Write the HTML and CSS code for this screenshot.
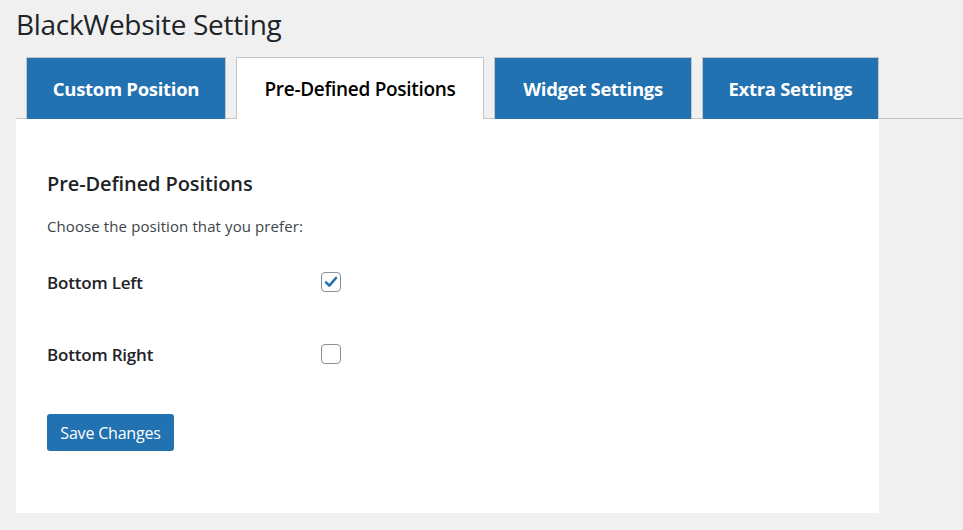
FILE: index.html
```html
<!DOCTYPE html>
<html>
<head>
<meta charset="utf-8">
<link rel="stylesheet" href="styles.css">
</head>
<body>
<div class="wrap">
  <h1 class="title">BlackWebsite Setting</h1>
  <nav class="tabs">
    <a class="tab">Custom Position</a>
    <a class="tab active">Pre-Defined Positions</a>
    <a class="tab">Widget Settings</a>
    <a class="tab">Extra Settings</a>
  </nav>
  <div class="panel">
    <h2 class="heading">Pre-Defined Positions</h2>
    <p class="desc">Choose the position that you prefer:</p>
    <div class="rows">
      <div class="row">
        <span class="label">Bottom Left</span>
        <span class="check">
          <svg viewBox="0 0 20 20" width="20" height="20"><path d="M5 10.4 L8.3 13.6 L15 6" fill="none" stroke="#2271b1" stroke-width="2.6" stroke-linecap="round" stroke-linejoin="round"/></svg>
        </span>
      </div>
      <div class="row">
        <span class="label">Bottom Right</span>
        <span class="check"></span>
      </div>
    </div>
    <button class="save">Save Changes</button>
  </div>
</div>
</body>
</html>
```
FILE: styles.css
```css
* { box-sizing: border-box; }
body {
  margin: 0;
  background: #f0f0f1;
  font-family: "Open Sans", "Noto Sans", sans-serif;
  color: #1d2327;
}
.wrap { padding-left: 16px; }
.title {
  margin: 0;
  padding-top: 6px;
  height: 57px;
  font-size: 28px;
  font-weight: 400;
  line-height: 36px;
  letter-spacing: -0.3px;
}
.tabs {
  display: flex;
  gap: 10px;
  padding-left: 10px;
  border-bottom: 1px solid #c3c4c7;
  height: 62px;
}
.tab {
  display: flex;
  align-items: center;
  justify-content: center;
  height: 62px;
  background: #2271b1;
  color: #fff;
  border: 1px solid #c3c4c7;
  border-bottom: none;
  font-size: 18.5px;
  font-weight: 700;
  letter-spacing: -0.3px;
}
.tab:nth-child(1) { width: 200px; }
.tab:nth-child(2) { width: 248px; }
.tab:nth-child(3) { width: 198px; }
.tab:nth-child(4) { width: 177px; }
.tab.active {
  background: #fff;
  color: #000;
  font-size: 19px;
  font-weight: 600;
  letter-spacing: -0.3px;
}
.panel {
  width: 863px;
  height: 394px;
  background: #fff;
  padding: 51px 31px 0;
}
.heading {
  margin: 0;
  font-size: 20px;
  font-weight: 600;
  line-height: 28px;
  letter-spacing: -0.1px;
}
.desc {
  margin: 18px 0 0;
  font-size: 15px;
  line-height: 20px;
  color: #3c434a;
  letter-spacing: 0.1px;
}
.rows {
  display: flex;
  flex-direction: column;
  gap: 32px;
  margin-top: 26px;
}
.row {
  display: flex;
  align-items: center;
  height: 40px;
}
.label {
  width: 274px;
  font-size: 17px;
  font-weight: 600;
  letter-spacing: -0.2px;
}
.check {
  width: 20px;
  height: 20px;
  border: 1px solid #8c8f94;
  border-radius: 4px;
  display: flex;
  align-items: center;
  justify-content: center;
}
.check svg { display: block; margin: -1px; }
.save {
  display: block;
  margin-top: 40px;
  width: 127px;
  height: 37px;
  background: #2271b1;
  color: #fff;
  border: none;
  border-radius: 3px;
  font-family: inherit;
  font-size: 16px;
  letter-spacing: -0.2px;
  padding: 0;
}
```
